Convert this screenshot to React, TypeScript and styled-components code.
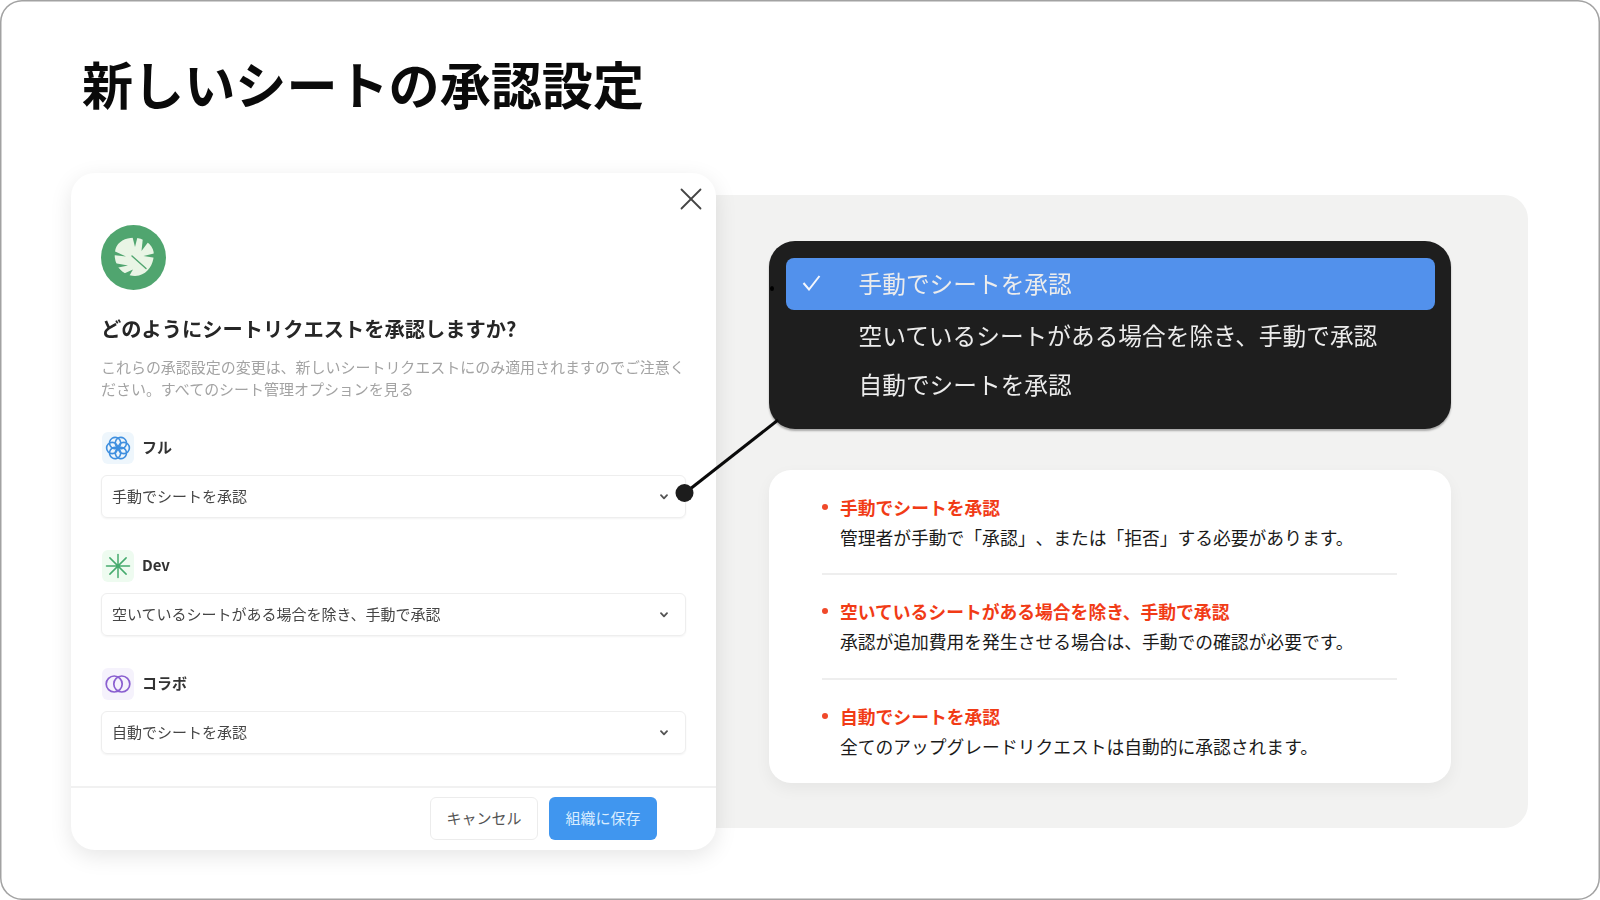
import React from "react";
import styled, { createGlobalStyle } from "styled-components";

const Global = createGlobalStyle`
  html, body { margin: 0; padding: 0; background: #fff; overflow: hidden; }
  * { box-sizing: border-box; }
`;

const FONT = `"Noto Sans CJK JP", "Noto Sans", sans-serif`;

const Stage = styled.div`
  position: relative;
  width: 1600px;
  height: 900px;
  padding: 53px 72px 0 71px;
  border-radius: 22px;
  box-shadow: inset 0 0 0 1.5px #a2a2a2;
  background: #fff;
  font-family: ${FONT};
  overflow: hidden;
`;

const Title = styled.h1`
  margin: 0 0 60px 11px;
  height: 60px;
  font-size: 51.1px;
  line-height: 60px;
  font-weight: 700;
  color: #0a0a0a;
`;

const Content = styled.div`
  display: flex;
  align-items: center;
`;

const Modal = styled.section`
  position: relative;
  z-index: 1;
  flex: none;
  width: 645px;
  height: 677px;
  display: flex;
  flex-direction: column;
  background: #fff;
  border-radius: 24px;
  box-shadow: 0 6px 22px rgba(0, 0, 0, 0.1);
  filter: blur(0.35px);
`;

const Body = styled.div`
  flex: 1;
  padding: 52px 30px 0;
`;

const CloseButton = styled.div`
  position: absolute;
  top: 15px;
  right: 14px;
  width: 22px;
  height: 22px;
  line-height: 0;
`;

const Logo = styled.div`
  width: 65px;
  height: 65px;
  line-height: 0;
`;

const Heading = styled.h2`
  margin: 25px 0 0;
  font-size: 20.25px;
  line-height: 28px;
  font-weight: 700;
  color: #262626;
`;

const Note = styled.p`
  margin: 13px 0 0;
  width: 585px;
  font-size: 14.98px;
  line-height: 22px;
  color: #a3a3a3;
`;

const Plan = styled.div`
  margin-top: 32px;
  &:first-of-type {
    margin-top: 30px;
  }
`;

const PlanHead = styled.div`
  display: flex;
  align-items: center;
  gap: 8px;
  height: 32px;
  padding-left: 1px;
`;

const Tile = styled.div<{ $bg: string }>`
  width: 32px;
  height: 32px;
  border-radius: 6px;
  background: ${(p) => p.$bg};
  display: flex;
  align-items: center;
  justify-content: center;
`;

const PlanName = styled.span`
  padding-bottom: 3px;
  font-size: 15px;
  font-weight: 700;
  color: #333;
`;

const Select = styled.div`
  margin-top: 11px;
  width: 585px;
  height: 43px;
  padding: 0 17px 2px 10px;
  display: flex;
  align-items: center;
  justify-content: space-between;
  border: 1.5px solid #eeeeee;
  border-radius: 6px;
  box-shadow: 0 1px 2px rgba(0, 0, 0, 0.05);
  font-size: 15px;
  color: #454545;
`;

const Arrow = styled.svg`
  margin-top: 3px;
`;

const Footer = styled.div`
  height: 64px;
  padding: 9px 59px 0 0;
  display: flex;
  justify-content: flex-end;
  gap: 11px;
  border-top: 2px solid #f1f1f1;
`;

const Button = styled.div<{ $primary?: boolean }>`
  width: 108px;
  height: 43px;
  padding-bottom: 3px;
  display: flex;
  align-items: center;
  justify-content: center;
  border-radius: 6px;
  font-size: 15px;
  color: ${(p) => (p.$primary ? "#d9edff" : "#555")};
  background: ${(p) => (p.$primary ? "#4096ef" : "#fff")};
  border: ${(p) => (p.$primary ? "none" : "1.5px solid #ececec")};
`;

const Panel = styled.section`
  flex: 1;
  width: 810px;
  height: 633px;
  padding: 46px 77px 45px 53px;
  display: flex;
  flex-direction: column;
  gap: 41px;
  background: #f2f2f1;
  border-radius: 0 24px 24px 0;
`;

const Menu = styled.div`
  position: relative;
  height: 188px;
  padding: 17px 16px 17px 17px;
  background: #1e1e1e;
  border-radius: 26px;
  box-shadow: 0 2px 2px rgba(0, 0, 0, 0.3);
  filter: blur(0.3px);
`;

const MenuItem = styled.div<{ $active?: boolean }>`
  height: ${(p) => (p.$active ? 52 : 49)}px;
  margin-bottom: ${(p) => (p.$active ? 2 : 0)}px;
  padding-bottom: ${(p) => (p.$active ? 2 : 3)}px;
  display: flex;
  align-items: center;
  border-radius: 8px;
  font-size: 23.7px;
  color: #ececec;
  background: ${(p) => (p.$active ? "#5291ec" : "transparent")};
`;

const CheckSlot = styled.div`
  width: 72.5px;
  padding-left: 16px;
  line-height: 0;
  flex: none;
`;

const StrayMark = styled.span`
  position: absolute;
  left: 1px;
  top: 45px;
  width: 4px;
  height: 5px;
  background: #000;
  border-radius: 50%;
`;

const InfoCard = styled.div`
  height: 313px;
  padding: 24px 54px 0 53px;
  background: #fff;
  border-radius: 22px;
  box-shadow: 0 6px 16px rgba(0, 0, 0, 0.05);
`;

const InfoItem = styled.div`
  padding: 23px 0 24px;
  border-bottom: 2px solid #eeeeee;
  &:first-child {
    padding-top: 0;
    padding-bottom: 23px;
  }
  &:last-child {
    padding-top: 23px;
    border-bottom: none;
  }
`;

const InfoTitle = styled.div`
  display: flex;
  align-items: center;
  gap: 12px;
  height: 26px;
  font-size: 17.8px;
  line-height: 26px;
  font-weight: 700;
  color: #f13b16;
  &::before {
    content: "";
    width: 6px;
    height: 6px;
    border-radius: 50%;
    background: #f0492a;
    flex: none;
  }
`;

const InfoText = styled.div`
  margin: 4px 0 0 18px;
  height: 26px;
  font-size: 17.78px;
  line-height: 26px;
  color: #1a1a1a;
  white-space: nowrap;
  text-spacing-trim: space-all;
`;

const Connector = styled.svg`
  position: absolute;
  left: 0;
  top: 0;
  z-index: 2;
  pointer-events: none;
`;

const Chevron = () => (
  <Arrow width="8" height="6" viewBox="0 0 8 6" fill="none">
    <path d="M1 1.2 L4 4.4 L7 1.2" stroke="#555" strokeWidth="1.8" strokeLinecap="round" strokeLinejoin="round" />
  </Arrow>
);

const LeafLogo = () => (
  <svg width="65" height="65" viewBox="0 0 65 65">
    <circle cx="32.5" cy="32.5" r="32.5" fill="#50a56f" />
    <path
      d="M14.5 24 C17 15 28 11.5 36 13 C46 14.5 53.5 22 52.8 30 C52.3 40 47 48 38 50.5 C30 52.5 20 48 16 40 C13.5 35 13 29 14.5 24 Z"
      fill="#e9f5e5"
    />
    <g fill="#50a56f">
      <path d="M12 25.5 L12 30 L25 31.5 Z" />
      <path d="M13 38 L15 43 L27 40.5 Z" />
      <path d="M22 49 L27 53 L32 44.5 Z" />
      <path d="M31 10 L37 10 L34 22 Z" />
      <path d="M42 12 L48 16 L40.5 26 Z" />
      <path d="M55 28 L55 33 L42.5 31 Z" />
    </g>
    <path d="M31 31 L45 43.5" stroke="#50a56f" strokeWidth="1.4" strokeLinecap="round" />
  </svg>
);

const FlowerIcon = () => (
  <svg width="26" height="26" viewBox="0 0 26 26" fill="none" stroke="#3f8fdf" strokeWidth="1.6">
    {[30, 90, 150, 210, 270, 330].map((a) => (
      <circle key={a} cx="13" cy="7.2" r="5.6" transform={`rotate(${a} 13 13)`} />
    ))}
  </svg>
);

const SparkIcon = () => (
  <svg width="26" height="26" viewBox="0 0 26 26" stroke="#46ab6e" strokeWidth="1.5" strokeLinecap="round">
    {[0, 45, 90, 135].map((a) => (
      <line key={a} x1="13" y1="1.5" x2="13" y2="24.5" transform={`rotate(${a} 13 13)`} />
    ))}
    <circle cx="13" cy="13" r="2" fill="#46ab6e" stroke="none" />
  </svg>
);

const RingsIcon = () => (
  <svg width="26" height="26" viewBox="0 0 26 26" fill="none" stroke="#8a5fd0" strokeWidth="1.7">
    <circle cx="9.2" cy="13" r="8" />
    <circle cx="16.8" cy="13" r="8" />
  </svg>
);

const plans = [
  { name: "フル", bg: "#eef6fc", icon: <FlowerIcon />, value: "手動でシートを承認" },
  { name: "Dev", bg: "#eefbf0", icon: <SparkIcon />, value: "空いているシートがある場合を除き、手動で承認" },
  { name: "コラボ", bg: "#f5f2fc", icon: <RingsIcon />, value: "自動でシートを承認" },
];

const info = [
  { title: "手動でシートを承認", text: "管理者が手動で「承認」、または「拒否」する必要があります。" },
  { title: "空いているシートがある場合を除き、手動で承認", text: "承認が追加費用を発生させる場合は、手動での確認が必要です。" },
  { title: "自動でシートを承認", text: "全てのアップグレードリクエストは自動的に承認されます。" },
];

export default function App() {
  return (
    <Stage>
      <Global />
      <Title>新しいシートの承認設定</Title>
      <Content>
        <Modal>
          <CloseButton>
            <svg width="22" height="22" viewBox="0 0 22 22" stroke="#444" strokeWidth="1.8" strokeLinecap="round">
              <line x1="1.5" y1="1.5" x2="20.5" y2="20.5" />
              <line x1="20.5" y1="1.5" x2="1.5" y2="20.5" />
            </svg>
          </CloseButton>
          <Body>
            <Logo>
              <LeafLogo />
            </Logo>
            <Heading>どのようにシートリクエストを承認しますか?</Heading>
            <Note>
              これらの承認設定の変更は、新しいシートリクエストにのみ適用されますのでご注意ください。すべてのシート管理オプションを見る
            </Note>
            {plans.map((p) => (
              <Plan key={p.name}>
                <PlanHead>
                  <Tile $bg={p.bg}>{p.icon}</Tile>
                  <PlanName>{p.name}</PlanName>
                </PlanHead>
                <Select>
                  <span>{p.value}</span>
                  <Chevron />
                </Select>
              </Plan>
            ))}
          </Body>
          <Footer>
            <Button>キャンセル</Button>
            <Button $primary>組織に保存</Button>
          </Footer>
        </Modal>
        <Panel>
          <Menu>
            <StrayMark />
            <MenuItem $active>
              <CheckSlot>
                <svg width="20" height="16" viewBox="0 0 20 16" fill="none" stroke="#f4f7fd" strokeWidth="2">
                  <path d="M1.5 8 L7 14.5 L17.5 1" />
                </svg>
              </CheckSlot>
              手動でシートを承認
            </MenuItem>
            <MenuItem>
              <CheckSlot />
              空いているシートがある場合を除き、手動で承認
            </MenuItem>
            <MenuItem>
              <CheckSlot />
              自動でシートを承認
            </MenuItem>
          </Menu>
          <InfoCard>
            {info.map((i) => (
              <InfoItem key={i.title}>
                <InfoTitle>{i.title}</InfoTitle>
                <InfoText>{i.text}</InfoText>
              </InfoItem>
            ))}
          </InfoCard>
        </Panel>
      </Content>
      <Connector width="1600" height="900" viewBox="0 0 1600 900">
        <line x1="685" y1="493" x2="778" y2="420" stroke="#0a0a0a" strokeWidth="3" />
        <circle cx="684.5" cy="493" r="9" fill="#1c1c1c" />
      </Connector>
    </Stage>
  );
}
